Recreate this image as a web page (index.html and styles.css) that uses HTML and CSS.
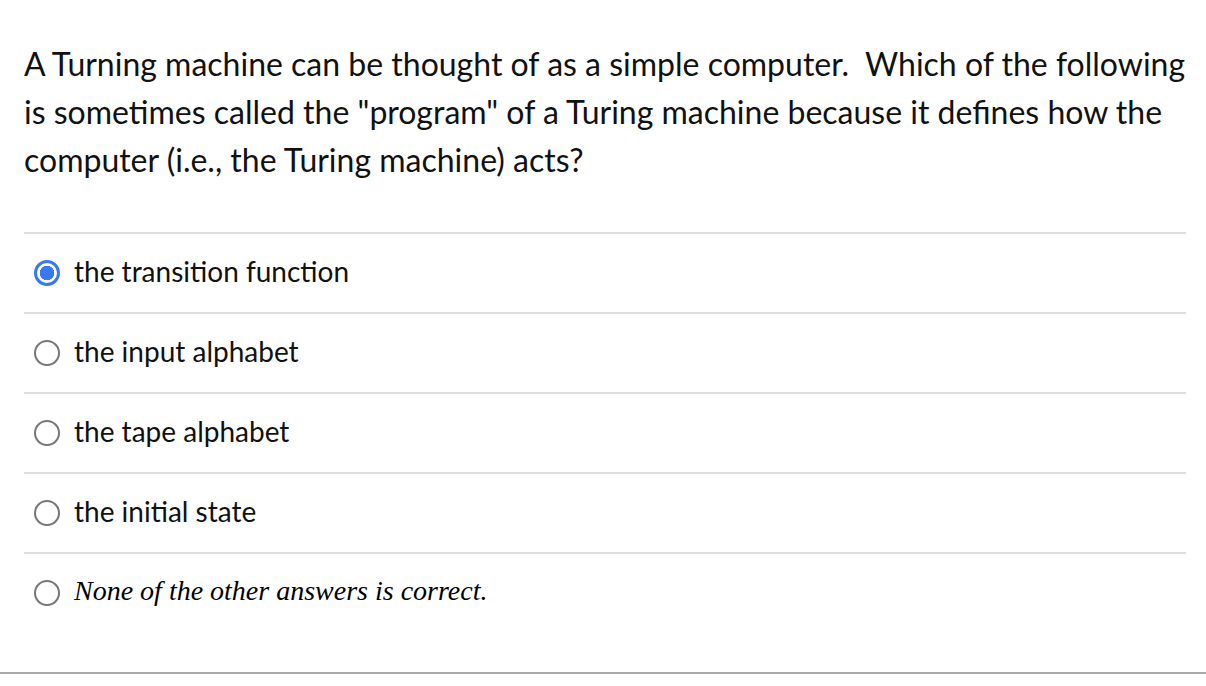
FILE: index.html
```html
<!DOCTYPE html>
<html>
<head>
<meta charset="utf-8">
<link rel="stylesheet" href="styles.css">
</head>
<body>
<div class="quiz">
  <div class="inner">
    <p class="question">A Turning machine can be thought of as a simple computer.&nbsp; Which of the following is sometimes called the "program" of a Turing machine because it defines how the computer (i.e., the Turing machine) acts?</p>
    <div class="answers">
      <label class="answer"><span class="radio checked"></span><span class="txt">the transition function</span></label>
      <label class="answer"><span class="radio"></span><span class="txt">the input alphabet</span></label>
      <label class="answer"><span class="radio"></span><span class="txt">the tape alphabet</span></label>
      <label class="answer"><span class="radio"></span><span class="txt">the initial state</span></label>
      <label class="answer last"><span class="radio"></span><span class="txt serif">None of the other answers is correct.</span></label>
    </div>
  </div>
</div>
</body>
</html>
```
FILE: styles.css
```css
html, body {
  margin: 0;
  padding: 0;
  background: #fff;
}
body {
  font-family: Lato, "Open Sans", sans-serif;
  color: #111;
}
.quiz {
  border-bottom: 2px solid #aaa;
  width: 1206px;
}
.inner {
  padding: 40px 20px 0 24px;
}
.question {
  margin: 0 0 48px 0;
  font-size: 32px;
  line-height: 48px;
}
.answers {
  display: flex;
  flex-direction: column;
}
.answer {
  display: flex;
  align-items: center;
  gap: 14px;
  height: 78px;
  border-top: 2px solid #ddd;
  padding-left: 10px;
}
.answer.last {
  margin-bottom: 40px;
}
.radio {
  width: 22px;
  height: 22px;
  border: 2px solid #777;
  border-radius: 50%;
  box-sizing: content-box;
  flex: none;
}
.radio.checked {
  border: 3px solid #3a78f0;
  width: 20px;
  height: 20px;
  background: radial-gradient(circle, #3a78f0 0 7px, #fff 7.5px);
}
.txt {
  font-size: 28px;
  line-height: 32px;
  margin-top: -4px;
}
.serif {
  font-family: "Liberation Serif", "Times New Roman", serif;
  font-style: italic;
  font-size: 28px;
  color: #000;
}
```
